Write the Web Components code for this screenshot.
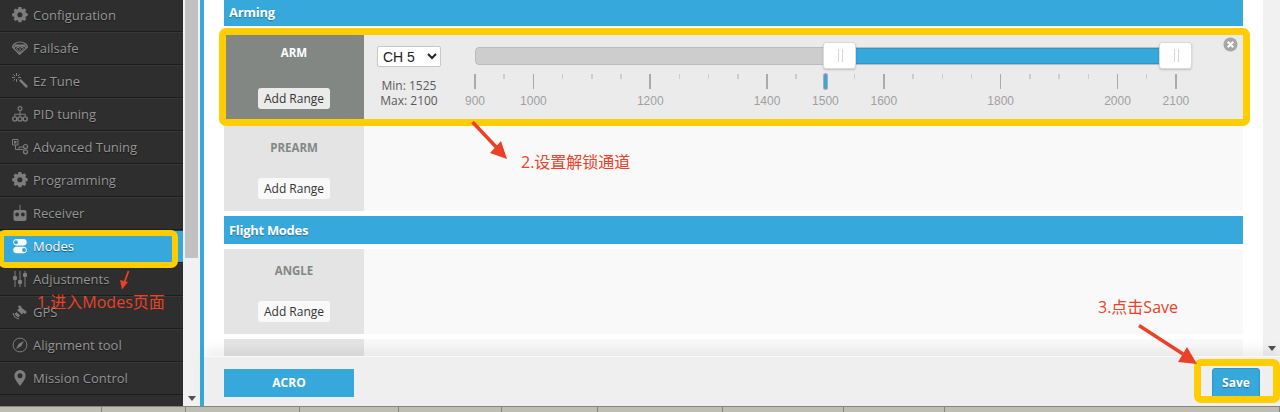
<!DOCTYPE html>
<html lang="zh">
<head>
<meta charset="utf-8">
<title>Modes</title>
<style>
html,body{margin:0;padding:0;height:412px;width:1280px;overflow:hidden;background:#fff;font-family:"Open Sans","Noto Sans CJK SC",sans-serif}
</style>
</head>
<body>
<bf-app></bf-app>
<script>
const ICONS={
gear:'<path fill-rule="evenodd" d="M6.300 0h3.400l.4 2.100 1.300.6L13.200 1.500l2.300 2.300-1.200 1.700.6 1.300 2.100.4v3.400l-2.100.4-.6 1.300 1.200 1.700-2.300 2.300-1.700-1.200-1.300.6-.4 2.100H6.300l-.4-2.100-1.300-.6-1.700 1.200L.6 14.200l1.200-1.700-.6-1.300L-.9 10.800V7.400L1.200 7l.6-1.300L.6 4 2.900 1.700l1.700 1.200 1.300-.6zM8 6a3 3 0 1 0 0 6 3 3 0 0 0 0-6z" transform="translate(1 0) scale(.86)"/>',
chute:'<path d="M8 2C4 2 1 4.500.5 7l7 7.500L15.500 7C15 4.500 12 2 8 2z" fill="none" stroke="currentColor" stroke-width="1.200"/><path d="M1 6.500h14L14 8.500 12 6.800 10.300 8.500 8 6.800 5.700 8.500 4 6.800 2 8.500z"/><path d="M3 4.500 13 4.500 14 6.500H2z"/><path d="M4.300 8.200 8 13.500 11.700 8.200M8 7.500v6" fill="none" stroke="currentColor" stroke-width=".9"/>',
wand:'<path d="M7 7.800 8.800 6 16 13.200 14.200 15z"/><path d="M4.500 0v3M4.500 6v3M0 4.500h3M6 4.500h3M1.300 1.300l1.800 1.800M6 6l.4.400M1.300 7.700 3 6M6 3l1.700-1.700" fill="none" stroke="currentColor" stroke-width="1"/>',
sitemap:'<circle cx="8" cy="2.600" r="1.900" fill="none" stroke="currentColor" stroke-width="1.200"/><path d="M7.500 4.500h1v3.300h5.200v3h-1V8.800H8.500v2h-1v-2H3.300v2h-1v-3h5.200z"/><circle cx="2.800" cy="13" r="2.100" fill="none" stroke="currentColor" stroke-width="1.400"/><circle cx="8" cy="13" r="2.100" fill="none" stroke="currentColor" stroke-width="1.400"/><circle cx="13.200" cy="13" r="2.100" fill="none" stroke="currentColor" stroke-width="1.400"/>',
tree:'<path d="M.5.500h5.500v5.500H.5z" fill="none" stroke="currentColor" stroke-width="1"/><rect x="2" y="2" width="2.500" height="2.500"/><path d="M3.500 6v4.500h8M7 10.500V8h4.500" fill="none" stroke="currentColor" stroke-width="1"/><circle cx="13.500" cy="7.500" r="2" fill="none" stroke="currentColor" stroke-width="1.200"/><circle cx="13.500" cy="12.800" r="2" fill="none" stroke="currentColor" stroke-width="1.200"/>',
robot:'<path d="M7.500 0h1v5h-1z"/><path fill-rule="evenodd" d="M3.500 5h9a2 2 0 0 1 2 2v7a2 2 0 0 1-2 2h-9a2 2 0 0 1-2-2V7a2 2 0 0 1 2-2zm1.600 2.600a1.900 1.900 0 1 0 0 3.800 1.900 1.900 0 0 0 0-3.800zm5.800 0a1.900 1.900 0 1 0 0 3.800 1.900 1.900 0 0 0 0-3.800z"/>',
toggle:'<path fill-rule="evenodd" d="M4 1h8a3.300 3.300 0 0 1 0 6.500H4A3.300 3.300 0 0 1 4 1zm0 1.300a2 2 0 1 0 0 4 2 2 0 0 0 0-4z"/><path fill-rule="evenodd" d="M4 8.800h8a3.300 3.300 0 0 1 0 6.500H4a3.300 3.300 0 0 1 0-6.500zm8 1.300a2 2 0 1 0 0 4 2 2 0 0 0 0-4z"/>',
sliders:'<path d="M2.500 0h1v5h-1zM2.500 9h1v7h-1zM7.500 0h1v9h-1zM7.500 13h1v3h-1zM12.500 0h1v2h-1zM12.500 6h1v10h-1z"/><rect x="1" y="5" width="4" height="4" rx="1"/><rect x="6" y="9" width="4" height="4" rx="1"/><rect x="11" y="2" width="4" height="4" rx="1"/>',
sat:'<path d="M5.200 6.300 8.500 3l5 3.800-3.500 3.700z"/><path d="M7.500 1.200 9.800 3 8 4.800 5.800 3zM13 6.500l2 1.500-2 2-2-1.500z"/><path d="M1 9c.5 3 2.800 5.300 6 6M3 9c.4 1.800 2 3.300 4 4" fill="none" stroke="currentColor" stroke-width="1.100"/><path d="M4.300 8 8.300 11.500 6 12.500 3.500 10z"/>',
compass:'<circle cx="8" cy="8" r="6.900" fill="none" stroke="currentColor" stroke-width="1"/><path d="M12 4 9.200 9.200 4 12 6.800 6.800z"/>',
pin:'<path fill-rule="evenodd" d="M8 0a5.600 5.600 0 0 1 5.600 5.700C13.600 9.500 9.500 13.800 8 16 6.500 13.800 2.400 9.500 2.400 5.700A5.600 5.600 0 0 1 8 0zm0 3.300a2.500 2.500 0 1 0 0 5 2.500 2.500 0 0 0 0-5z"/>'
};

class NavItem extends HTMLElement{
  constructor(){super();const s=this.attachShadow({mode:'open'});
    const active=this.hasAttribute('active');
    s.innerHTML=`<style>
    :host{display:flex;flex:none;align-items:center;box-sizing:border-box;height:33px;padding-left:12px;gap:5px;font:13px "Open Sans",sans-serif;color:${active?'#fff':'#969696'};background:${active?'#37a8db':'#2e2e2e'};border-bottom:1px solid #1c1c1c;box-shadow:inset 0 1px 0 #383838;text-shadow:0 1px 1px rgba(0,0,0,.55)}
    svg{width:16px;height:16px;flex:none;fill:currentColor;color:${active?'#fff':'#7d7d7d'};overflow:visible}
    </style><svg viewBox="0 0 16 16">${ICONS[this.getAttribute('icon')]||''}</svg><slot></slot>`;}
}
customElements.define('nav-item',NavItem);

class SideNav extends HTMLElement{
  constructor(){super();const s=this.attachShadow({mode:'open'});
    s.innerHTML=`<style>:host{display:flex;flex-direction:column;width:183px;flex:none;background:#2e2e2e;margin-top:-1px;overflow:hidden}</style><slot></slot>`;}
}
customElements.define('side-nav',SideNav);

class ScrollBar extends HTMLElement{
  constructor(){super();const s=this.attachShadow({mode:'open'});
    const thumb=this.getAttribute('thumb');
    s.innerHTML=`<style>
    :host{display:flex;flex-direction:column;align-items:center;justify-content:space-between;width:17px;flex:none;background:#f1f1f1;box-sizing:border-box;padding-bottom:5px}
    .t{width:13px;height:${thumb||0}px;background:#c1c1c1}
    .a{width:0;height:0;border-left:4px solid transparent;border-right:4px solid transparent;border-top:5px solid #505050}
    </style><div class="t"></div><div class="a"></div>`;}
}
customElements.define('scroll-bar',ScrollBar);

class SectionHead extends HTMLElement{
  constructor(){super();const s=this.attachShadow({mode:'open'});
    s.innerHTML=`<style>:host{display:flex;flex:none;align-items:center;height:28px;padding-left:5px;background:#37a8db;color:#fff;font:700 13px "Open Sans",sans-serif;letter-spacing:-.3px;text-shadow:0 1px 1px rgba(0,0,0,.3)}</style><slot></slot>`;}
}
customElements.define('section-head',SectionHead);

class ModeRow extends HTMLElement{
  constructor(){super();const s=this.attachShadow({mode:'open'});
    const on=this.hasAttribute('on');
    const name=this.getAttribute('name');
    s.innerHTML=`<style>
    :host{display:flex;height:${this.getAttribute('h')||85}px;margin-top:5px;background:${on?'#ebebeb':'#f9f9f9'};flex:none}
    .l{width:140px;flex:none;display:flex;flex-direction:column;align-items:center;justify-content:space-between;box-sizing:border-box;padding:13px 0 12px;background:${on?'#828784':'#e4e4e4'};color:${on?'#fff':'#828885'};font:700 11.500px/18px "Open Sans",sans-serif}
    .b{display:block;box-sizing:border-box;width:72px;height:21px;border-radius:3px;background:${on?'#ebebeb':'#f9f9f9'};color:#333;font:400 12px/21px "Open Sans",sans-serif;text-align:center}
    .c{flex:1;min-width:0;display:flex}
    </style><div class="l">${name?`<span>${name}</span><span class="b">Add Range</span>`:''}</div><div class="c"><slot></slot></div>`;}
}
customElements.define('mode-row',ModeRow);

class RangeSlider extends HTMLElement{
  constructor(){super();const s=this.attachShadow({mode:'open'});
    const labels={900:1,1000:1,1200:1,1400:1,1500:1,1600:1,1800:1,2000:1,2100:1};
    let pips='';
    for(let v=900;v<=2100;v+=50){
      const lab=labels[v];
      pips+=`<div class="pip"><i class="${lab?'big':'sm'}${v==1500?' mark':''}"></i>${lab?`<span>${v}</span>`:''}</div>`;
    }
    s.innerHTML=`<style>
    :host{display:flex;flex:1;min-width:0;position:relative;padding:15px 0 0 13px;box-sizing:border-box}
    .side{width:64px;flex:none;display:flex;flex-direction:column;align-items:center}
    select{width:64px;height:21px;box-sizing:border-box;font:14px "Liberation Sans",sans-serif;color:#222;background:#fff;border:1px solid #c8c8c8;border-radius:2px;padding:0 0 0 1px;margin:0;outline:none}
    .mm{margin-top:11px;font:12px/15px "Open Sans",sans-serif;color:#5a5a5a;text-align:center;white-space:nowrap}
    .main{margin-left:34px;width:701px;flex:none;display:flex;flex-direction:column}
    .track{position:relative;box-sizing:border-box;height:18px;margin-top:1px;background:#cdcdcd;border:1px solid #bbb;border-radius:4px;display:flex}
    .fill{position:absolute;left:380px;width:304px;top:0;bottom:0;background:#37a8db;border-top:1px solid #2f95c4;border-bottom:1px solid #2f95c4;box-sizing:border-box}
    .h{position:absolute;top:-6px;width:33px;height:27px;box-sizing:border-box;background:#fff;border:1px solid #d9d9d9;border-radius:3px;box-shadow:0 1px 2px rgba(0,0,0,.18)}
    .h::before{content:"";position:absolute;left:14px;top:6px;width:3px;height:13px;border-left:1px solid #d5d5d5;border-right:1px solid #d5d5d5}
    .scale{display:flex;justify-content:space-between;margin-top:9px}
    .pip{width:0;display:flex;flex-direction:column;align-items:center;position:relative}
    .pip i{display:block;flex:none;width:1.500px;background:#aaa}
    .big{height:15px}.sm{height:5px;background:#ccc!important;margin-bottom:10px}
    .mark{width:3px!important;border-radius:2px;background:#37a8db!important;box-shadow:0 0 0 1px #aaa}
    .pip span{margin-top:5px;font:12px/14px "Liberation Sans",sans-serif;color:#a0a0a0;white-space:nowrap}
    .x{position:absolute;top:6px;right:5px;width:15px;height:15px;fill:#a6a6a6}
    </style>
    <div class="side"><select><option>CH 5</option></select><div class="mm">Min: 1525<br>Max: 2100</div></div>
    <div class="main"><div class="track"><div class="fill"></div><div class="h" style="left:347px"></div><div class="h" style="left:683px"></div></div><div class="scale">${pips}</div></div>
    <svg class="x" viewBox="0 0 16 16"><circle cx="8" cy="8" r="7.500"/><path d="M5 5l6 6M11 5l-6 6" stroke="#fff" stroke-width="2.200" fill="none"/></svg>`;}
}
customElements.define('range-slider',RangeSlider);

class FooterBar extends HTMLElement{
  constructor(){super();const s=this.attachShadow({mode:'open'});
    s.innerHTML=`<style>
    :host{display:flex;align-items:center;justify-content:space-between;height:50px;flex:none;box-sizing:border-box;background:#efefef;border-top:1px solid #fafafa;padding:0 20px;position:relative;box-shadow:0 -8px 10px rgba(0,0,0,.06)}
    .a{width:130px;height:28px;margin-top:2px;background:#37a8db;color:#fff;font:700 12px/28px "Open Sans",sans-serif;text-align:center}
    .s{width:48px;height:30px;margin-top:2px;box-sizing:border-box;border:1px solid #2f95c4;border-radius:3px;background:#37a8db;color:#fff;font:700 12px/28px "Open Sans",sans-serif;text-align:center;text-shadow:0 1px 1px rgba(0,0,0,.3)}
    </style><div class="a">ACRO</div><div class="s">Save</div>`;}
}
customElements.define('footer-bar',FooterBar);

class TaskBar extends HTMLElement{
  constructor(){super();const s=this.attachShadow({mode:'open'});
    const xs=[102,84,114,99,103,96,125,121,101,335];
    s.innerHTML=`<style>
    :host{display:flex;flex:none;height:6px;box-sizing:border-box;background:#bdbdb3;border-top:1px solid #85857b}
    div{height:5px;box-sizing:border-box;border-right:1px solid #85857b;flex:none}
    </style>`+xs.map(w=>`<div style="width:${w}px"></div>`).join('');}
}
customElements.define('task-bar',TaskBar);

class AnnotLayer extends HTMLElement{
  constructor(){super();const s=this.attachShadow({mode:'open'});
    s.innerHTML=`<style>
    :host{display:block;position:absolute;inset:0;pointer-events:none}
    .box{position:absolute;box-sizing:border-box;border:7px solid #ffcd00;border-radius:7px}
    .t{position:absolute;color:#ea4128;font:16px/20px "Open Sans","Noto Sans CJK SC",sans-serif;white-space:nowrap}
    svg{position:absolute;left:0;top:0;width:1280px;height:412px}
    </style>
    <div class="box" style="left:-2px;top:230px;width:180px;height:38px;border-width:6px"></div>
    <div class="box" style="left:219px;top:28px;width:1031px;height:98px"></div>
    <div class="box" style="left:1194px;top:359px;width:86px;height:44px"></div>
    <svg viewBox="0 0 1280 412">
      <path d="M128.500 271 123.500 285" stroke="#ea4128" stroke-width="1.800" fill="none"/><path d="M120 280 122 289.500 128 282z" fill="#ea4128"/>
      <path d="M472.500 122 498 149" stroke="#ea4128" stroke-width="3.500" fill="none"/><path d="M490 153 507 159 501 141z" fill="#ea4128"/>
      <path d="M1139 325.500 1183 354" stroke="#ea4128" stroke-width="3.500" fill="none"/><path d="M1178 362 1197 364 1187 347z" fill="#ea4128"/>
    </svg>
    <span class="t" style="left:37px;top:292px">1.进入Modes页面</span>
    <span class="t" style="left:521px;top:152px">2.设置解锁通道</span>
    <span class="t" style="left:1098px;top:297px">3.点击Save</span>`;}
}
customElements.define('annot-layer',AnnotLayer);

class BfApp extends HTMLElement{
  constructor(){super();const s=this.attachShadow({mode:'open'});
    const nav=[['gear','Configuration'],['chute','Failsafe'],['wand','Ez Tune'],['sitemap','PID tuning'],['tree','Advanced Tuning'],['gear','Programming'],['robot','Receiver'],['toggle','Modes',1],['sliders','Adjustments'],['sat','GPS'],['compass','Alignment tool'],['pin','Mission Control']];
    s.innerHTML=`<style>
    :host{display:flex;flex-direction:column;position:relative;width:1280px;height:412px;overflow:hidden}
    .top{display:flex;height:406px;flex:none}
    .strip{width:4px;flex:none;background:#37a8db}
    .main{flex:1;min-width:0;display:flex;flex-direction:column;background:#fff}
    .scroll{flex:1;min-height:0;display:flex;overflow:hidden}
    .content{flex:1;min-width:0;overflow:hidden;display:flex;flex-direction:column;padding:0 20px;margin-top:-2px}
    .flight{margin-top:5px}
    </style>
    <div class="top">
      <side-nav>${nav.map(n=>`<nav-item icon="${n[0]}" ${n[2]?'active':''}>${n[1]}</nav-item>`).join('')}</side-nav>
      <scroll-bar thumb="258"></scroll-bar>
      <div class="strip"></div>
      <div class="main">
        <div class="scroll">
          <div class="content">
            <section-head>Arming</section-head>
            <mode-row name="ARM" on h="90"><range-slider></range-slider></mode-row>
            <mode-row name="PREARM"></mode-row>
            <section-head class="flight">Flight Modes</section-head>
            <mode-row name="ANGLE"></mode-row>
            <mode-row></mode-row>
          </div>
          <scroll-bar></scroll-bar>
        </div>
        <footer-bar></footer-bar>
      </div>
    </div>
    <task-bar></task-bar>
    <annot-layer></annot-layer>`;}
}
customElements.define('bf-app',BfApp);
</script>
</body>
</html>
